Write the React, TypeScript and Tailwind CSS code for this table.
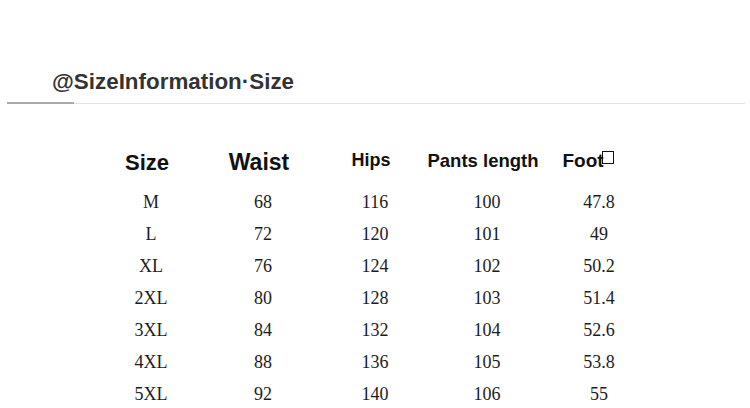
const rows = [
  ["M", "68", "116", "100", "47.8"],
  ["L", "72", "120", "101", "49"],
  ["XL", "76", "124", "102", "50.2"],
  ["2XL", "80", "128", "103", "51.4"],
  ["3XL", "84", "132", "104", "52.6"],
  ["4XL", "88", "136", "105", "53.8"],
  ["5XL", "92", "140", "106", "55"],
];

export default function App() {
  return (
    <div className="h-[408px] w-[750px] overflow-hidden bg-white">
      <div className="pt-[69px] pl-[52px] font-['Liberation_Sans',Arial,sans-serif] text-[22.4px] font-bold leading-[26px] text-[#333]">
        @SizeInformation·Size
      </div>

      {/* underline with short accent on the left */}
      <div className="mt-[7px] ml-[7px] flex w-[738px] items-end">
        <div className="h-[2px] w-[67px] bg-[#a9a9a9]" />
        <div className="h-px flex-1 bg-[#e2e2e2]" />
      </div>

      <div className="mt-[41px] ml-[95px] font-['Liberation_Sans',Arial,sans-serif] font-bold text-[#111]">
        <div className="grid h-[32px] grid-cols-[repeat(5,112px)] items-center -ml-[4px]">
          <div className="text-center text-[22px]">Size</div>
          <div className="text-center text-[23px]">Waist</div>
          <div className="text-center text-[18px] -mt-[3px]">Hips</div>
          <div className="text-center text-[18.5px] -mt-[3px]">Pants length</div>
          <div className="flex justify-center pr-[14px] text-[19px] -mt-[2px]">
            <span>Foot</span>
            <span className="ml-[-2px] mt-[4px] inline-block h-[13px] w-[12px] border-[1.5px] border-[#111]" />
          </div>
        </div>
      </div>

      <div className="mt-[9px] ml-[95px] font-['Liberation_Serif','Times_New_Roman',serif] text-[18px] text-[#1c1c1c]">
        {rows.map((r) => (
          <div key={r[0]} className="grid h-[32px] grid-cols-[repeat(5,112px)] items-center leading-[32px]">
            {r.map((c, i) => (
              <div key={i} className="text-center">
                {c}
              </div>
            ))}
          </div>
        ))}
      </div>
    </div>
  );
}
